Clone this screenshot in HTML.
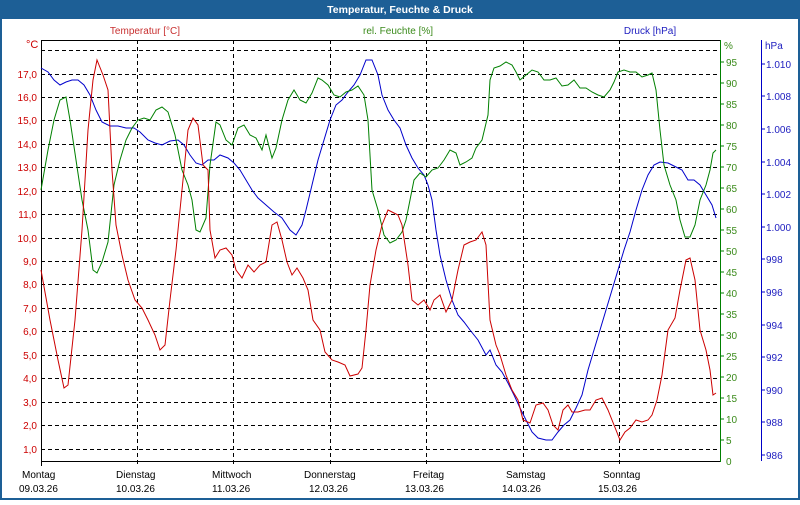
<!DOCTYPE html>
<html><head><meta charset="utf-8"><style>
body{margin:0;width:800px;height:500px;overflow:hidden;background:#fff;font-family:"Liberation Sans",sans-serif}
</style></head><body>
<svg width="800" height="500" xmlns="http://www.w3.org/2000/svg" font-family="Liberation Sans, sans-serif" font-size="10">
<rect x="0" y="0" width="800" height="500" fill="#1d5f96"/>
<rect x="2" y="19" width="796" height="479" fill="#fff"/>
<text x="400" y="13" fill="#fff" font-weight="bold" font-size="10.5" text-anchor="middle">Temperatur, Feuchte &amp; Druck</text>
<text x="145" y="34" fill="#c83030" text-anchor="middle">Temperatur [°C]</text>
<text x="398" y="34" fill="#3a8a1a" text-anchor="middle">rel. Feuchte [%]</text>
<text x="650" y="34" fill="#2020c0" text-anchor="middle">Druck [hPa]</text>
<text x="26" y="48" fill="#cc0000" font-size="11">°C</text>
<text x="724" y="49" fill="#3a8a1a">%</text>
<text x="765" y="49" fill="#2020c0">hPa</text>
<g stroke="#000" stroke-dasharray="4,3" stroke-width="1">
<line x1="41" x2="720" y1="50.5" y2="50.5"/><line x1="41" x2="720" y1="74.5" y2="74.5"/><line x1="41" x2="720" y1="97.5" y2="97.5"/><line x1="41" x2="720" y1="120.5" y2="120.5"/><line x1="41" x2="720" y1="144.5" y2="144.5"/><line x1="41" x2="720" y1="167.5" y2="167.5"/><line x1="41" x2="720" y1="191.5" y2="191.5"/><line x1="41" x2="720" y1="214.5" y2="214.5"/><line x1="41" x2="720" y1="238.5" y2="238.5"/><line x1="41" x2="720" y1="261.5" y2="261.5"/><line x1="41" x2="720" y1="284.5" y2="284.5"/><line x1="41" x2="720" y1="308.5" y2="308.5"/><line x1="41" x2="720" y1="331.5" y2="331.5"/><line x1="41" x2="720" y1="355.5" y2="355.5"/><line x1="41" x2="720" y1="378.5" y2="378.5"/><line x1="41" x2="720" y1="402.5" y2="402.5"/><line x1="41" x2="720" y1="425.5" y2="425.5"/><line x1="41" x2="720" y1="449.5" y2="449.5"/>
<line x1="137.5" x2="137.5" y1="40" y2="466"/><line x1="233.5" x2="233.5" y1="40" y2="466"/><line x1="330.5" x2="330.5" y1="40" y2="466"/><line x1="426.5" x2="426.5" y1="40" y2="466"/><line x1="523.5" x2="523.5" y1="40" y2="466"/><line x1="619.5" x2="619.5" y1="40" y2="466"/>
</g>
<line x1="41" x2="720" y1="40.5" y2="40.5" stroke="#000"/>
<line x1="41" x2="720" y1="461.5" y2="461.5" stroke="#000"/>
<line x1="41.5" x2="41.5" y1="40" y2="466" stroke="#000"/>
<line x1="720.5" x2="720.5" y1="40" y2="462" stroke="#008000"/>
<line x1="761.5" x2="761.5" y1="40" y2="461" stroke="#0000c8"/>
<g fill="#cc0000" text-anchor="end" font-size="10">
<text x="37" y="78">17,0</text><text x="37" y="101">16,0</text><text x="37" y="124">15,0</text><text x="37" y="148">14,0</text><text x="37" y="171">13,0</text><text x="37" y="195">12,0</text><text x="37" y="218">11,0</text><text x="37" y="242">10,0</text><text x="37" y="265">9,0</text><text x="37" y="288">8,0</text><text x="37" y="312">7,0</text><text x="37" y="335">6,0</text><text x="37" y="359">5,0</text><text x="37" y="382">4,0</text><text x="37" y="406">3,0</text><text x="37" y="429">2,0</text><text x="37" y="453">1,0</text>
</g>
<g stroke="#008000"><line x1="720" x2="724" y1="62" y2="62"/><line x1="720" x2="724" y1="83" y2="83"/><line x1="720" x2="724" y1="104" y2="104"/><line x1="720" x2="724" y1="125" y2="125"/><line x1="720" x2="724" y1="146" y2="146"/><line x1="720" x2="724" y1="167" y2="167"/><line x1="720" x2="724" y1="188" y2="188"/><line x1="720" x2="724" y1="209" y2="209"/><line x1="720" x2="724" y1="230" y2="230"/><line x1="720" x2="724" y1="251" y2="251"/><line x1="720" x2="724" y1="272" y2="272"/><line x1="720" x2="724" y1="293" y2="293"/><line x1="720" x2="724" y1="314" y2="314"/><line x1="720" x2="724" y1="335" y2="335"/><line x1="720" x2="724" y1="356" y2="356"/><line x1="720" x2="724" y1="377" y2="377"/><line x1="720" x2="724" y1="398" y2="398"/><line x1="720" x2="724" y1="419" y2="419"/><line x1="720" x2="724" y1="440" y2="440"/></g>
<g fill="#3a8a1a" font-size="10">
<text x="726" y="66">95</text><text x="726" y="87">90</text><text x="726" y="108">85</text><text x="726" y="129">80</text><text x="726" y="150">75</text><text x="726" y="171">70</text><text x="726" y="192">65</text><text x="726" y="213">60</text><text x="726" y="234">55</text><text x="726" y="255">50</text><text x="726" y="276">45</text><text x="726" y="297">40</text><text x="726" y="318">35</text><text x="726" y="339">30</text><text x="726" y="360">25</text><text x="726" y="381">20</text><text x="726" y="402">15</text><text x="726" y="423">10</text><text x="726" y="444">5</text><text x="726" y="465">0</text>
</g>
<g stroke="#0000c8"><line x1="761" x2="765" y1="64" y2="64"/><line x1="761" x2="765" y1="96" y2="96"/><line x1="761" x2="765" y1="129" y2="129"/><line x1="761" x2="765" y1="162" y2="162"/><line x1="761" x2="765" y1="194" y2="194"/><line x1="761" x2="765" y1="227" y2="227"/><line x1="761" x2="765" y1="259" y2="259"/><line x1="761" x2="765" y1="292" y2="292"/><line x1="761" x2="765" y1="325" y2="325"/><line x1="761" x2="765" y1="357" y2="357"/><line x1="761" x2="765" y1="390" y2="390"/><line x1="761" x2="765" y1="422" y2="422"/><line x1="761" x2="765" y1="455" y2="455"/></g>
<g fill="#2020c0" font-size="10">
<text x="766" y="68">1.010</text><text x="766" y="100">1.008</text><text x="766" y="133">1.006</text><text x="766" y="166">1.004</text><text x="766" y="198">1.002</text><text x="766" y="231">1.000</text><text x="766" y="263">998</text><text x="766" y="296">996</text><text x="766" y="329">994</text><text x="766" y="361">992</text><text x="766" y="394">990</text><text x="766" y="426">988</text><text x="766" y="459">986</text>
</g>
<g fill="#000" font-size="10">
<text x="22" y="478">Montag</text><text x="19" y="492">09.03.26</text>
<text x="116" y="478">Dienstag</text><text x="116" y="492">10.03.26</text>
<text x="212" y="478">Mittwoch</text><text x="212" y="492">11.03.26</text>
<text x="304" y="478">Donnerstag</text><text x="309" y="492">12.03.26</text>
<text x="413" y="478">Freitag</text><text x="405" y="492">13.03.26</text>
<text x="506" y="478">Samstag</text><text x="502" y="492">14.03.26</text>
<text x="603" y="478">Sonntag</text><text x="598" y="492">15.03.26</text>
</g>
<polyline fill="none" stroke="#0000cc" stroke-width="1" points="41,68 48,72 54,80 60,85 66,82 72,80 78,80 84,85 90,95 96,110 102,122 110,126 118,126 126,128 134,128 140,132 148,140 155,143 162,145 170,141 178,140 184,145 190,155 196,163 202,165 208,160 214,160 220,155 228,158 234,163 240,170 246,180 252,190 258,198 266,205 274,212 282,218 290,230 296,235 302,225 306,210 312,185 318,160 324,140 330,120 336,105 342,100 348,92 354,85 360,75 366,60 372,60 378,75 382,95 388,110 394,120 400,128 406,145 412,158 418,168 424,175 428,185 432,200 436,230 440,255 446,280 452,300 458,315 464,322 470,330 478,340 486,355 490,350 496,365 502,372 508,383 514,395 520,408 526,420 532,432 538,438 546,440 552,440 558,432 564,425 570,420 576,408 582,395 588,370 594,350 600,330 606,310 612,290 618,270 624,250 630,232 636,210 642,190 648,175 654,165 660,162 668,163 676,167 682,170 688,180 694,180 700,185 706,195 712,205 716,218"/>
<polyline fill="none" stroke="#008000" stroke-width="1" points="41,190 48,150 54,120 60,100 66,97 70,120 76,160 82,200 88,230 93,270 97,273 102,262 108,242 114,185 120,160 126,140 132,128 138,120 144,118 150,120 156,110 162,107 168,112 175,135 182,170 188,185 192,200 196,230 200,232 206,218 210,165 216,122 220,125 226,140 232,145 238,128 244,125 250,135 256,138 262,150 266,135 272,158 276,148 282,120 288,100 294,90 300,100 306,103 312,93 318,78 322,80 328,85 334,95 340,97 346,92 352,90 358,86 364,95 368,120 372,190 378,210 384,235 390,243 396,240 402,232 406,220 410,200 414,180 420,173 426,177 432,170 438,168 444,160 450,150 456,153 460,165 466,162 472,158 476,148 482,140 488,115 490,80 494,68 500,66 506,62 512,65 516,72 520,80 526,75 532,70 538,72 544,80 550,80 556,78 562,86 568,85 574,80 580,88 586,88 592,92 598,95 604,97 610,90 614,82 618,72 624,70 630,72 636,72 642,77 648,75 652,73 656,90 660,130 664,165 670,185 676,200 680,220 685,237 690,237 695,225 700,200 706,185 710,170 713,153 716,150"/>
<polyline fill="none" stroke="#cc0000" stroke-width="1" points="41,270 50,320 58,360 64,388 68,385 75,320 82,230 88,130 93,80 97,60 103,75 108,90 112,170 116,225 122,255 128,280 135,300 142,308 148,320 155,335 160,350 165,345 170,300 176,250 182,190 188,130 193,118 198,125 203,165 208,170 210,230 215,258 220,250 226,248 232,255 236,270 242,278 248,265 254,272 260,265 266,262 272,225 277,222 282,240 287,262 292,275 297,268 303,278 308,290 313,320 320,330 325,352 332,360 338,362 345,365 350,376 358,374 362,368 366,330 370,285 376,250 382,225 388,210 392,212 398,215 402,225 408,265 412,300 418,305 424,300 430,310 434,300 440,295 446,312 452,300 458,270 464,245 470,242 476,240 482,232 486,245 490,320 496,345 500,355 506,375 512,390 518,400 523,420 530,423 536,405 543,403 548,410 553,425 558,430 563,410 568,405 572,412 578,412 585,410 590,410 596,400 602,398 608,410 614,425 620,440 625,432 630,428 636,420 642,422 648,420 652,415 657,400 662,375 668,330 675,318 680,290 686,260 690,258 695,280 700,330 706,350 710,370 713,395 716,393"/>
</svg>
</body></html>
